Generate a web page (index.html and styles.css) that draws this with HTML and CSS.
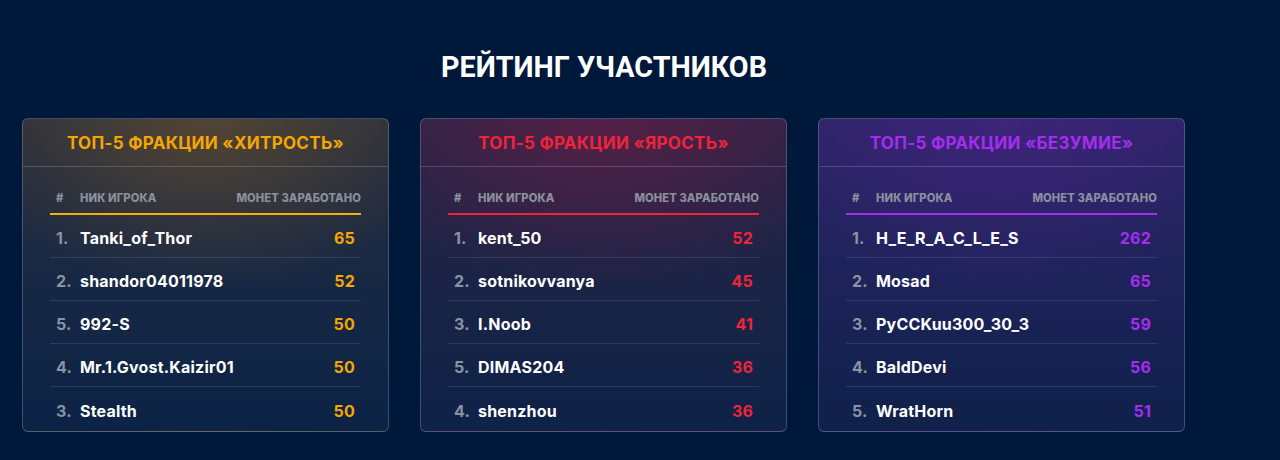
FILE: index.html
```html
<!DOCTYPE html>
<html lang="ru">
<head>
<meta charset="utf-8">
<title>Рейтинг участников</title>
<link rel="stylesheet" href="styles.css">
</head>
<body>
<section class="rating">
  <h1 class="rating-title">РЕЙТИНГ УЧАСТНИКОВ</h1>
  <div class="cards">
    <div class="card card-cunning">
      <div class="card-head">ТОП-5 ФРАКЦИИ «ХИТРОСТЬ»</div>
      <div class="card-body">
        <div class="thead"><span class="c-rank">#</span><span class="c-name">НИК ИГРОКА</span><span class="c-val">МОНЕТ ЗАРАБОТАНО</span></div>
        <div class="row"><span class="c-rank">1.</span><span class="c-name">Tanki_of_Thor</span><span class="c-val">65</span></div>
        <div class="row"><span class="c-rank">2.</span><span class="c-name">shandor04011978</span><span class="c-val">52</span></div>
        <div class="row"><span class="c-rank">5.</span><span class="c-name">992-S</span><span class="c-val">50</span></div>
        <div class="row"><span class="c-rank">4.</span><span class="c-name">Mr.1.Gvost.Kaizir01</span><span class="c-val">50</span></div>
        <div class="row"><span class="c-rank">3.</span><span class="c-name">Stealth</span><span class="c-val">50</span></div>
      </div>
    </div>
    <div class="card card-rage">
      <div class="card-head">ТОП-5 ФРАКЦИИ «ЯРОСТЬ»</div>
      <div class="card-body">
        <div class="thead"><span class="c-rank">#</span><span class="c-name">НИК ИГРОКА</span><span class="c-val">МОНЕТ ЗАРАБОТАНО</span></div>
        <div class="row"><span class="c-rank">1.</span><span class="c-name">kent_50</span><span class="c-val">52</span></div>
        <div class="row"><span class="c-rank">2.</span><span class="c-name">sotnikovvanya</span><span class="c-val">45</span></div>
        <div class="row"><span class="c-rank">3.</span><span class="c-name">I.Noob</span><span class="c-val">41</span></div>
        <div class="row"><span class="c-rank">5.</span><span class="c-name">DIMAS204</span><span class="c-val">36</span></div>
        <div class="row"><span class="c-rank">4.</span><span class="c-name">shenzhou</span><span class="c-val">36</span></div>
      </div>
    </div>
    <div class="card card-madness">
      <div class="card-head">ТОП-5 ФРАКЦИИ «БЕЗУМИЕ»</div>
      <div class="card-body">
        <div class="thead"><span class="c-rank">#</span><span class="c-name">НИК ИГРОКА</span><span class="c-val">МОНЕТ ЗАРАБОТАНО</span></div>
        <div class="row"><span class="c-rank">1.</span><span class="c-name">H_E_R_A_C_L_E_S</span><span class="c-val">262</span></div>
        <div class="row"><span class="c-rank">2.</span><span class="c-name">Mosad</span><span class="c-val">65</span></div>
        <div class="row"><span class="c-rank">3.</span><span class="c-name">PyCCKuu300_30_3</span><span class="c-val">59</span></div>
        <div class="row"><span class="c-rank">4.</span><span class="c-name">BaldDevi</span><span class="c-val">56</span></div>
        <div class="row"><span class="c-rank">5.</span><span class="c-name">WratHorn</span><span class="c-val">51</span></div>
      </div>
    </div>
  </div>
</section>
</body>
</html>
```
FILE: styles.css
```css
html, body {
  margin: 0;
  padding: 0;
  background: #001839;
  height: 100%;
  overflow: hidden;
}
body {
  font-family: "Inter", "Roboto", "Liberation Sans", sans-serif;
  color: #fff;
}
.rating {
  width: 1164px;
  margin-left: 22px;
  padding-top: 50px;
}
.rating-title {
  margin: 0 0 34px;
  text-align: center;
  font-family: "Roboto", "Liberation Sans", sans-serif;
  font-size: 28.7px;
  font-weight: 700;
  line-height: 34px;
  color: #fff;
  letter-spacing: 0;
}
.cards {
  display: grid;
  grid-template-columns: repeat(3, 367px);
  column-gap: 31px;
}
.card {
  height: 314px;
  box-sizing: border-box;
  border: 1px solid rgba(160, 180, 210, 0.32);
  border-radius: 6px;
  overflow: hidden;
}
.card-cunning {
  background:
    radial-gradient(ellipse 260px 170px at 50% 0%, rgba(120, 88, 40, 0.55), rgba(120, 88, 40, 0) 100%),
    linear-gradient(180deg, #262d3f 0%, #152744 60%, #0c2346 100%);
}
.card-rage {
  background:
    radial-gradient(ellipse 260px 170px at 50% 0%, rgba(120, 30, 70, 0.55), rgba(120, 30, 70, 0) 100%),
    linear-gradient(180deg, #2b2346 0%, #182446 60%, #0e2247 100%);
}
.card-madness {
  background:
    radial-gradient(ellipse 260px 170px at 50% 0%, rgba(70, 36, 130, 0.7), rgba(70, 36, 130, 0) 100%),
    linear-gradient(180deg, #2b2566 0%, #1b2257 60%, #0f2149 100%);
}
.card-head {
  height: 48px;
  border-bottom: 1px solid rgba(160, 180, 210, 0.28);
  display: flex;
  align-items: center;
  justify-content: center;
  font-size: 17px;
  font-weight: 700;
  letter-spacing: 0.3px;
  padding-top: 1px;
  box-sizing: border-box;
}
.card-cunning .card-head { color: #f7a600; }
.card-rage .card-head { color: #f0233b; }
.card-madness .card-head { color: #a62cf0; }

.card-body {
  padding: 23px 27px 0 27px;
}
.thead {
  display: flex;
  align-items: center;
  height: 16px;
  padding-bottom: 7px;
  font-size: 11.2px;
  font-weight: 800;
  color: #8a909e;
  letter-spacing: 0.1px;
}
.card-cunning .thead { border-bottom: 2px solid #f7b000; }
.card-rage .thead { border-bottom: 2px solid #f0233b; }
.card-madness .thead { border-bottom: 2px solid #a62cf0; }

.c-rank {
  width: 24px;
  padding-left: 6px;
  flex: none;
}
.c-name {
  flex: 1;
}
.c-val {
  text-align: right;
}

.row {
  display: flex;
  align-items: center;
  height: 43px;
  box-sizing: border-box;
  padding-top: 4px;
  border-bottom: 1px solid rgba(140, 160, 195, 0.2);
  font-size: 16px;
  font-weight: 700;
  letter-spacing: 0.2px;
}
.row:first-of-type { height: 44px; }
.row:last-child { border-bottom: none; }
.row .c-rank { color: #8a93a3; }
.row .c-name { color: #fff; }
.row .c-val { padding-right: 6px; }
.card-cunning .row .c-val { color: #f7a600; }
.card-rage .row .c-val { color: #f0233b; }
.card-madness .row .c-val { color: #a62cf0; }
```
